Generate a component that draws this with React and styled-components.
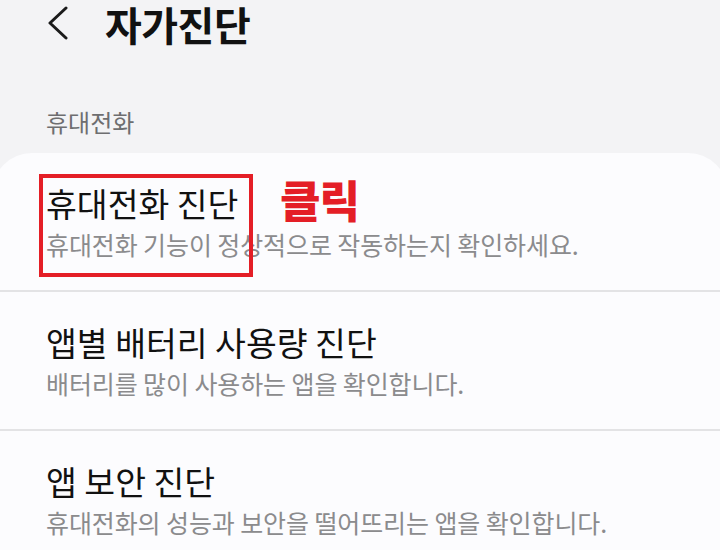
import React from 'react'
import styled, { createGlobalStyle } from 'styled-components'

const GlobalStyle = createGlobalStyle`
  html, body {
    margin: 0;
    padding: 0;
    background: #f3f3f5;
    font-family: "Noto Sans CJK KR", "Noto Sans", sans-serif;
    overflow: hidden;
  }
`

const items = [
  {
    title: '휴대전화 진단',
    desc: '휴대전화 기능이 정상적으로 작동하는지 확인하세요.',
    marked: true,
  },
  {
    title: '앱별 배터리 사용량 진단',
    desc: '배터리를 많이 사용하는 앱을 확인합니다.',
  },
  {
    title: '앱 보안 진단',
    desc: '휴대전화의 성능과 보안을 떨어뜨리는 앱을 확인합니다.',
  },
]

function App() {
  return (
    <Page>
      <GlobalStyle />
      <Header>
        <BackButton>
          <svg width="24" height="34" viewBox="0 0 24 34">
            <polyline points="20,2 4,17 20,32" fill="none" stroke="#1a1a1a" strokeWidth="3" strokeLinecap="round" strokeLinejoin="round" />
          </svg>
        </BackButton>
        <Title>자가진단</Title>
      </Header>

      <SectionLabel>휴대전화</SectionLabel>

      <Card>
        {items.map((item, i) => (
          <Row key={item.title} last={i === items.length - 1}>
            <ItemTitle>{item.title}</ItemTitle>
            <ItemDesc>{item.desc}</ItemDesc>
            {item.marked && (
              <>
                <MarkBox />
                <ClickLabel>클릭</ClickLabel>
              </>
            )}
          </Row>
        ))}
      </Card>
    </Page>
  )
}

export default App

const Page = styled.div`
  width: 720px;
  height: 550px;
  overflow: hidden;
  background: #f3f3f5;
`
const Header = styled.div`
  display: flex;
  align-items: center;
  height: 48px;
  padding-left: 46px;
`
const BackButton = styled.div`
  display: flex;
  align-items: center;
  width: 24px;
  height: 34px;
  margin-top: -2px;
`
const Title = styled.h1`
  margin: 0 0 0 35px;
  font-size: 40px;
  line-height: 48px;
  font-weight: 700;
  color: #111;
  letter-spacing: -0.5px;
`
const SectionLabel = styled.div`
  margin-top: 58px;
  padding-left: 46px;
  font-size: 24px;
  line-height: 32px;
  color: #6e6e70;
`
const Card = styled.div`
  margin: 15px -8px 0;
  background: #fcfcfe;
  border-radius: 40px 40px 0 0;
  overflow: hidden;
`
const Row = styled.div`
  position: relative;
  padding: 30px 54px 0;
  height: 139px;
  box-sizing: border-box;
  border-bottom: ${p => (p.last ? 'none' : '2px solid #e3e3e5')};
`
const ItemTitle = styled.div`
  font-size: 33.5px;
  line-height: 40px;
  color: #111;
`
const ItemDesc = styled.div`
  margin-top: 5px;
  font-size: 25px;
  line-height: 32px;
  color: #8b8b8d;
  letter-spacing: -0.1px;
`
const MarkBox = styled.div`
  position: absolute;
  left: 47px;
  top: 21px;
  width: 206px;
  height: 95px;
  border: 4px solid #e41e26;
`
const ClickLabel = styled.div`
  position: absolute;
  left: 288px;
  top: 19px;
  font-size: 44px;
  line-height: 54px;
  font-weight: 900;
  color: #e41e26;
  letter-spacing: -1px;
`
